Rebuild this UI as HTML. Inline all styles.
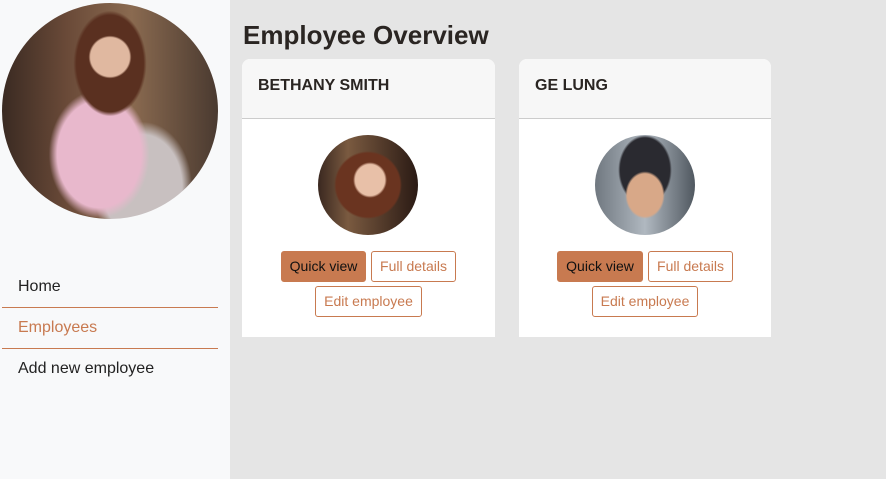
<!DOCTYPE html>
<html><head><style>
*{margin:0;padding:0;box-sizing:border-box}
body{width:886px;height:479px;background:#e5e5e5;font-family:"Liberation Sans",sans-serif;position:relative;overflow:hidden}
.side{position:absolute;left:0;top:0;width:230px;height:479px;background:#f8f9fa}
.big{position:absolute;left:2px;top:3px;width:216px;height:216px;border-radius:50%;
background:radial-gradient(circle at 50% 25%,#e0b8a0 0 10%,transparent 11%),radial-gradient(ellipse at 50% 28%,#5a3020 0 22%,transparent 24%),radial-gradient(ellipse at 45% 70%,#e8b8cc 0 25%,transparent 30%),radial-gradient(ellipse at 65% 85%,#c8c0c0 0 20%,transparent 25%),linear-gradient(90deg,#3a2a22,#6a4a38 30%,#8a6a50 60%,#4a3a30);}
.nav{position:absolute;left:2px;width:216px;font-size:16px;padding-left:16px}
h1{position:absolute;left:243px;top:20px;font-size:26px;font-weight:bold;color:#2a2522}
.card{position:absolute;top:59px;width:253px;height:278px;background:#fff;border-radius:8px 8px 0 0;overflow:hidden}
.hd{height:60px;background:#f7f7f7;border-bottom:1px solid #ccc;padding:18px 16px;font-weight:bold;font-size:16px;color:#2a2522}
.av{position:absolute;left:76px;top:76px;width:100px;height:100px;border-radius:50%}
.b{position:absolute;height:31px;border:1px solid #c87a50;border-radius:3px;font-size:14px;line-height:29px;text-align:center;color:#c87a50;background:#fff}
.q{background:#c87a50;color:#111}
</style></head><body>
<div class="side">
<div class="big"></div>
<div class="nav" style="top:278px;color:#222">Home</div>
<div style="position:absolute;left:2px;top:307px;width:216px;border-top:1px solid #c87a50"></div>
<div class="nav" style="top:319px;color:#c87a50">Employees</div>
<div style="position:absolute;left:2px;top:348px;width:216px;border-top:1px solid #c87a50"></div>
<div class="nav" style="top:360px;color:#222">Add new employee</div>
</div>
<h1>Employee Overview</h1>
<div class="card" style="left:242px">
<div class="hd">BETHANY SMITH</div>
<div class="av" style="background:radial-gradient(ellipse at 52% 45%,#e8c0a8 0 20%,transparent 23%),radial-gradient(ellipse at 50% 50%,#6a3420 0 45%,transparent 48%),linear-gradient(90deg,#3a2820,#7a5a40 30%,#2a1a14)"></div>
<div class="b q" style="left:39px;top:192px;width:85px">Quick view</div>
<div class="b" style="left:129px;top:192px;width:85px">Full details</div>
<div class="b" style="left:73px;top:227px;width:107px">Edit employee</div>
</div>
<div class="card" style="left:519px;width:252px">
<div class="hd">GE LUNG</div>
<div class="av" style="background:radial-gradient(ellipse at 50% 60%,#d8a888 0 25%,transparent 28%),radial-gradient(ellipse at 50% 35%,#2a2a30 0 35%,transparent 38%),linear-gradient(90deg,#707880,#b0b8c0 50%,#505860)"></div>
<div class="b q" style="left:38px;top:192px;width:86px">Quick view</div>
<div class="b" style="left:129px;top:192px;width:85px">Full details</div>
<div class="b" style="left:73px;top:227px;width:106px">Edit employee</div>
</div>
</body></html>
